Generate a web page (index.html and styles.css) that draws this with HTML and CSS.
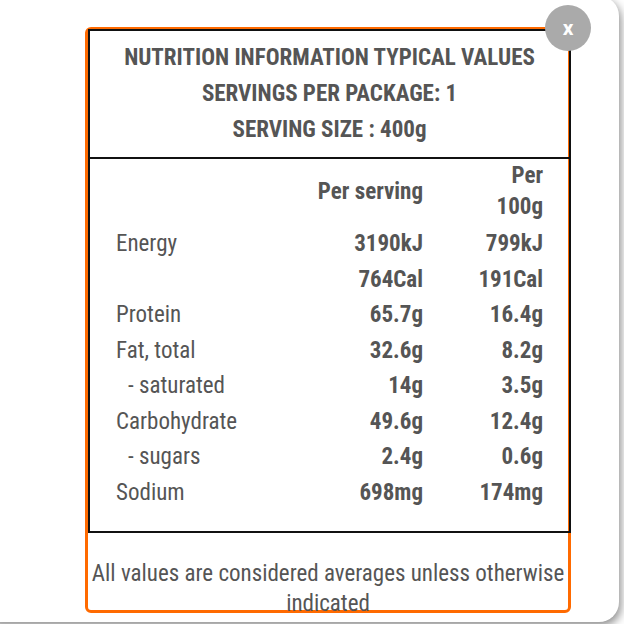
FILE: index.html
```html
<!DOCTYPE html>
<html lang="en">
<head>
<meta charset="utf-8">
<title>Nutrition information</title>
<link rel="stylesheet" href="styles.css">
</head>
<body>
<div class="card">
  <div class="panel">
    <div class="facts">
      <div class="facts-head">
        <p>NUTRITION INFORMATION TYPICAL VALUES</p>
        <p>SERVINGS PER PACKAGE: 1</p>
        <p>SERVING SIZE : 400g</p>
      </div>
      <div class="facts-body">
        <div class="row row-head"><span class="label"></span><span class="val">Per serving</span><span class="val wrap">Per 100g</span></div>
        <div class="row first"><span class="label">Energy</span><span class="val">3190kJ</span><span class="val">799kJ</span></div>
        <div class="row"><span class="label"></span><span class="val">764Cal</span><span class="val">191Cal</span></div>
        <div class="row"><span class="label">Protein</span><span class="val">65.7g</span><span class="val">16.4g</span></div>
        <div class="row"><span class="label">Fat, total</span><span class="val">32.6g</span><span class="val">8.2g</span></div>
        <div class="row"><span class="label sub">- saturated</span><span class="val">14g</span><span class="val">3.5g</span></div>
        <div class="row"><span class="label">Carbohydrate</span><span class="val">49.6g</span><span class="val">12.4g</span></div>
        <div class="row"><span class="label sub">- sugars</span><span class="val">2.4g</span><span class="val">0.6g</span></div>
        <div class="row"><span class="label">Sodium</span><span class="val">698mg</span><span class="val">174mg</span></div>
      </div>
    </div>
    <p class="note">All values are considered averages unless otherwise indicated</p>
  </div>
  <button class="close" type="button">x</button>
</div>
</body>
</html>
```

FILE: styles.css
```css
html, body {
  margin: 0;
  padding: 0;
  background: #ffffff;
}
body {
  font-family: "Roboto Condensed", Roboto, "Liberation Sans", sans-serif;
  font-stretch: condensed;
  color: #555555;
  overflow: hidden;
  height: 624px;
}
.card {
  position: relative;
  box-sizing: border-box;
  margin: -4px 0 0 -20px;
  width: 639px;
  height: 626px;
  padding: 31px 0 0 105px;
  background: #ffffff;
  border-radius: 20px;
  box-shadow: 2px 4px 10px rgba(0, 0, 0, 0.45);
}
.panel {
  box-sizing: border-box;
  width: 486px;
  height: 586px;
  border: 3px solid #ff6a00;
  border-radius: 6px;
  display: flex;
  flex-direction: column;
}
.facts {
  margin: -1px -3px 0 0;
  border: 2px solid #111111;
}
.facts-head {
  padding: 9px 0 9px;
  border-bottom: 2px solid #111111;
  text-align: center;
}
.facts-head p {
  margin: 0;
  font-size: 23px;
  line-height: 36px;
  font-weight: 700;
}
.facts-body {
  padding: 0 26px 21px;
  font-size: 23px;
}
.row {
  display: grid;
  grid-template-columns: minmax(0, 1fr) 140px 66px;
  column-gap: 54px;
  align-items: center;
  line-height: 35.5px;
}
.row-head {
  line-height: 31px;
  padding-top: 1px;
}
.row.first {
  margin-top: 4px;
}
.label {
  white-space: nowrap;
}
.label.sub {
  padding-left: 12px;
}
.val {
  text-align: right;
  font-weight: 700;
  white-space: nowrap;
}
.val.wrap {
  white-space: normal;
}
.note {
  margin: 0 -4px;
  padding: 26px 0 0;
  font-size: 23px;
  line-height: 30px;
  text-align: center;
}
.close {
  position: absolute;
  left: 565px;
  top: 9px;
  width: 46px;
  height: 46px;
  border: none;
  border-radius: 50%;
  background: #aaaaaa;
  color: #ffffff;
  font-family: Roboto, "Liberation Sans", sans-serif;
  font-size: 21px;
  font-weight: 700;
  line-height: 44px;
  padding: 0;
  text-align: center;
}
```
